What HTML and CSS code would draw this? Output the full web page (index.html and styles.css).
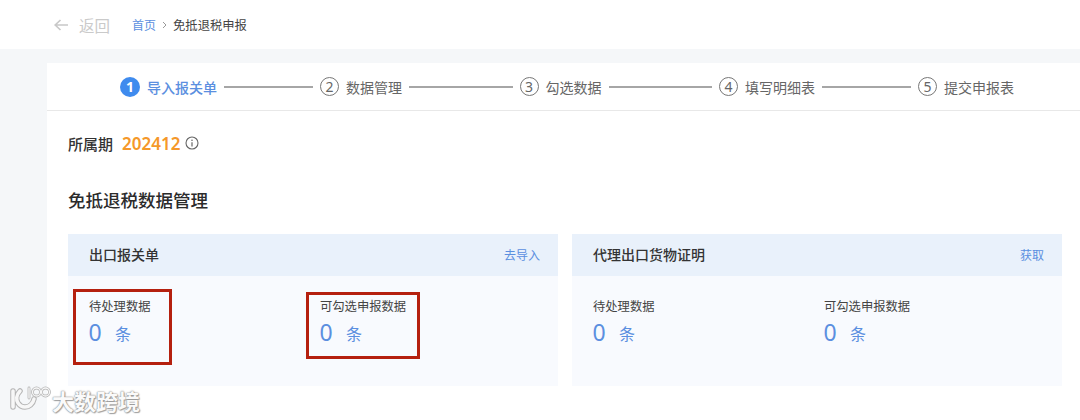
FILE: index.html
```html
<!DOCTYPE html>
<html lang="zh-CN">
<head>
<meta charset="utf-8">
<title>免抵退税申报</title>
<link rel="stylesheet" href="styles.css">
</head>
<body>
<header class="topbar">
  <svg class="back-icon" width="14" height="12" viewBox="0 0 14 12"><path d="M6.5 1 1.2 6l5.3 5M1.2 6H14" fill="none" stroke="#c8c8c8" stroke-width="1.7"/></svg>
  <span class="back-text">返回</span>
  <a class="crumb-link">首页</a>
  <svg class="crumb-sep" width="5" height="8" viewBox="0 0 5 8"><path d="M1 1l3 3-3 3" fill="none" stroke="#999" stroke-width="1"/></svg>
  <span class="crumb-current">免抵退税申报</span>
</header>
<div class="page">
  <main class="main">
    <nav class="steps">
      <span class="dot dot-active">1</span><span class="step-label step-label-active">导入报关单</span><i class="step-line step-line-a"></i>
      <span class="dot">2</span><span class="step-label">数据管理</span><i class="step-line step-line-b"></i>
      <span class="dot">3</span><span class="step-label">勾选数据</span><i class="step-line step-line-b"></i>
      <span class="dot">4</span><span class="step-label">填写明细表</span><i class="step-line step-line-a"></i>
      <span class="dot">5</span><span class="step-label">提交申报表</span>
    </nav>
    <div class="content">
      <div class="period">
        <span class="period-label">所属期</span>
        <span class="period-value">202412</span>
        <svg class="info" width="14" height="14" viewBox="0 0 14 14"><circle cx="7" cy="7" r="6" fill="none" stroke="#666" stroke-width="1.1"/><path d="M7 6.2V10.4" stroke="#666" stroke-width="1.2"/><circle cx="7" cy="4.2" r=".8" fill="#666"/></svg>
      </div>
      <h1 class="heading">免抵退税数据管理</h1>
      <div class="cards">
        <section class="card">
          <div class="card-head"><h2 class="card-title">出口报关单</h2><a class="card-link">去导入</a></div>
          <div class="card-body">
            <div class="stat"><div class="stat-label">待处理数据</div><div class="stat-value"><b class="num">0</b><span class="unit">条</span></div></div>
            <div class="stat"><div class="stat-label">可勾选申报数据</div><div class="stat-value"><b class="num">0</b><span class="unit">条</span></div></div>
            <i class="mark mark-a"></i>
            <i class="mark mark-b"></i>
          </div>
        </section>
        <section class="card">
          <div class="card-head"><h2 class="card-title">代理出口货物证明</h2><a class="card-link">获取</a></div>
          <div class="card-body">
            <div class="stat"><div class="stat-label">待处理数据</div><div class="stat-value"><b class="num">0</b><span class="unit">条</span></div></div>
            <div class="stat"><div class="stat-label">可勾选申报数据</div><div class="stat-value"><b class="num">0</b><span class="unit">条</span></div></div>
          </div>
        </section>
      </div>
    </div>
  </main>
</div>
<div class="watermark">
  <svg class="wm-logo" width="44" height="30" viewBox="0 0 44 30">
    <g fill="none" stroke-linecap="round" class="wm-shadow">
      <path d="M5 6v16M12 6C8 10 8 15 10 18c2 3 5 4 7 4 4 0 8-3 9-8"/>
      <path class="wm-thin" d="M21 3v10"/>
      <circle class="wm-thin" cx="28.500" cy="7" r="4"/><circle class="wm-thin" cx="37.500" cy="7" r="4"/>
    </g>
    <g fill="none" stroke-linecap="round" class="wm-stroke">
      <path d="M5 6v16M12 6C8 10 8 15 10 18c2 3 5 4 7 4 4 0 8-3 9-8"/>
      <path class="wm-thin" d="M21 3v10"/>
      <circle class="wm-thin" cx="28.500" cy="7" r="4"/><circle class="wm-thin" cx="37.500" cy="7" r="4"/>
    </g>
  </svg>
  <span class="wm-text">大数跨境</span>
</div>
</body>
</html>
```
FILE: styles.css
```css
* { box-sizing: border-box; }
html, body { margin: 0; padding: 0; }
body {
  position: relative;
  width: 1080px;
  height: 420px;
  overflow: hidden;
  background: #fff;
  font-family: "Noto Sans CJK SC", "Noto Sans", sans-serif;
  color: #333;
}
.topbar {
  height: 49px;
  display: flex;
  align-items: center;
  padding-left: 54px;
  background: #fff;
}
.back-text { margin-left: 11px; font-size: 15.5px; color: #cacaca; }
.crumb-link { margin-left: 22px; font-size: 12px; color: #5b8fe0; }
.crumb-sep { margin-left: 6px; }
.crumb-current { margin-left: 6px; font-size: 12.3px; color: #444; }
.page {
  height: 371px;
  padding: 14px 0 0 47px;
  background: #f5f7f9;
}
.main { height: 357px; background: #fff; }
.steps {
  height: 48px;
  padding-left: 73px;
  display: flex;
  align-items: center;
  border-bottom: 1px solid #e8e8e8;
}
.dot {
  flex: none;
  width: 19px;
  height: 19px;
  border: 1px solid #777;
  border-radius: 50%;
  display: flex;
  align-items: center;
  justify-content: center;
  font-size: 14px;
  line-height: 1;
  color: #666;
  font-family: "Noto Sans", sans-serif;
}
.dot-active {
  width: 20px;
  height: 20px;
  border: 0;
  background: #3f8bee;
  color: #fff;
  font-weight: 700;
}
.step-label { margin-left: 7px; font-size: 14px; color: #666; white-space: nowrap; }
.step-label-active { color: #5b8fe0; font-weight: 500; }
.step-line { flex: none; height: 2px; margin: 0 7px; background: #a6a6a6; }
.step-line-a { width: 89px; }
.step-line-b { width: 103.5px; }
.content { padding: 0 18px 0 21px; }
.period { height: 64px; display: flex; align-items: center; }
.period-label { font-size: 15px; font-weight: 500; color: #333; }
.period-value { margin-left: 9px; font-size: 17px; font-weight: 600; color: #f5982a; font-family: "Noto Sans", sans-serif; }
.info { margin-left: 5px; }
.heading {
  margin: 12px 0 0;
  height: 26px;
  line-height: 26px;
  font-size: 17.5px;
  font-weight: 500;
  color: #2b2b2b;
}
.cards {
  margin-top: 21px;
  display: grid;
  grid-template-columns: 490px 490px;
  gap: 14px;
}
.card { height: 152px; background: #f8fafe; }
.card-head {
  height: 42px;
  padding: 0 18px 2px 21px;
  display: flex;
  align-items: center;
  justify-content: space-between;
  background: #e9f1fb;
}
.card-title { margin: 0; font-size: 14px; font-weight: 500; color: #333; }
.card-link { font-size: 12px; color: #5b8fe0; }
.card-body {
  position: relative;
  padding: 21px 0 0 21px;
  display: grid;
  grid-template-columns: 231px 1fr;
}
.stat-label { height: 18px; line-height: 18px; font-size: 12.3px; color: #444; }
.stat-value { margin-top: 1px; height: 32px; display: flex; align-items: center; }
.num { width: 26.5px; margin-left: -0.5px; font-size: 23px; font-weight: 400; color: #5b8fe0; font-family: "Noto Sans", sans-serif; }
.unit { margin-top: 2px; font-size: 16px; color: #5b8fe0; }
.mark { position: absolute; border: 3px solid #b5200f; }
.mark-a { left: 5px; top: 13px; width: 99px; height: 76px; }
.mark-b { left: 238px; top: 16px; width: 114px; height: 67px; }
.watermark {
  position: absolute;
  left: 8px;
  top: 385px;
  display: flex;
  align-items: center;
}
.wm-shadow { stroke: #b5b5b5; stroke-width: 5.5; }
.wm-stroke { stroke: #f7f7f7; stroke-width: 3.5; }
.wm-shadow .wm-thin { stroke-width: 2.8; }
.wm-stroke .wm-thin { stroke-width: 1.3; }
.wm-text {
  font-size: 22px;
  line-height: 30px;
  font-weight: 700;
  color: #fafafa;
  text-shadow: 0 0 2px #8f8f8f, 0 0 1px #8f8f8f, 1px 1px 1px #aaa;
}
```
